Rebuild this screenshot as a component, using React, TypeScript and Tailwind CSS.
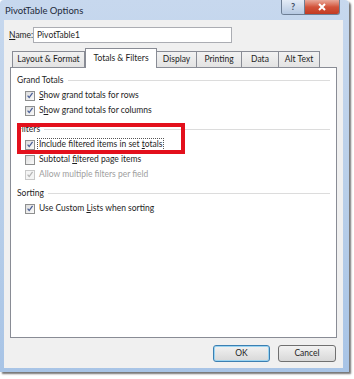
import React from "react";

const font = { fontFamily: 'Lato, "Noto Sans", sans-serif' };

const Check = ({ checked, disabled }: { checked?: boolean; disabled?: boolean }) => (
  <span
    className={`relative flex h-[10px] w-[10px] shrink-0 items-center justify-center border ${
      disabled ? "border-[#c8c8c8] bg-[#f4f4f4]" : "border-[#8e8f8f] bg-gradient-to-br from-[#dcdcdc] to-[#fbfbfb]"
    }`}
  >
    {checked && (
      <svg viewBox="0 0 10 10" className="h-[9px] w-[9px]">
        <path
          d="M2 5.2 L4 7.6 L8.2 1.8"
          fill="none"
          stroke={disabled ? "#b4b4b4" : "#4a5f97"}
          strokeWidth="1.6"
        />
      </svg>
    )}
  </span>
);

const Row = ({
  label,
  checked,
  disabled,
  focused,
}: {
  label: React.ReactNode;
  checked?: boolean;
  disabled?: boolean;
  focused?: boolean;
}) => (
  <div className="flex h-[15px] items-center gap-[2px] pl-[14px]">
    <Check checked={checked} disabled={disabled} />
    <span
      className={`whitespace-nowrap px-[1px] leading-[11px] ${disabled ? "text-[#a0a0a0]" : "text-[#1e1e1e]"} ${
        focused ? "border border-dotted border-[#555]" : "border border-transparent"
      }`}
    >
      {label}
    </span>
  </div>
);

const Group = ({ title }: { title: string }) => (
  <div className="flex h-[16px] items-center gap-[4px] pl-[6px] pr-[6px]">
    <span className="text-[#1e1e1e]">{title}</span>
    <div className="h-px flex-1 bg-[#dcdcdc]" />
  </div>
);

const tabs = ["Layout & Format", "Totals & Filters", "Display", "Printing", "Data", "Alt Text"];
const widths = ["w-[73px]", "w-[72px]", "w-[41px]", "w-[46px]", "w-[38px]", "w-[42px]"];

export default function App() {
  return (
    <div className="h-[379px] w-[354px] overflow-hidden bg-white text-[8.5px]" style={font}>
      <div className="relative h-[372px] w-[349px] rounded-t-[4px] bg-gradient-to-b from-[#c7d8ee] via-[#b9cfe9] to-[#a8c4e6] shadow-[2px_2px_2px_rgba(0,0,0,0.55)]">
        {/* title bar */}
        <div className="flex h-[20px] items-start">
          <span className="pl-[5px] pt-[4px] text-[9.5px] text-[#1e2a3a]">PivotTable Options</span>
          <div className="ml-auto mr-[9px] flex h-[15px] overflow-hidden rounded-b-[3px] border border-t-0 border-[#6d7e94]">
            <div className="flex w-[22px] items-center justify-center bg-gradient-to-b from-[#e4ecf6] to-[#b6c9e2] text-[9px] font-bold text-[#3c4b60]">
              ?
            </div>
            <div className="flex w-[35px] items-center justify-center border-l border-[#6d7e94] bg-gradient-to-b from-[#e8a89a] via-[#d2533a] to-[#c23a22]">
              <svg viewBox="0 0 10 8" className="h-[8px] w-[10px]">
                <path d="M2 1 L8 7 M8 1 L2 7" stroke="white" strokeWidth="2" />
              </svg>
            </div>
          </div>
        </div>

        {/* client area */}
        <div className="ml-[4px] flex h-[348px] w-[339px] flex-col bg-[#f0f0f0]">
          <div className="flex h-[29px] items-center pl-[5px] pt-[1px]">
            <span className="w-[24px] shrink-0 whitespace-nowrap text-[#1e1e1e]">
              <span className="underline">N</span>ame:
            </span>
            <div className="flex h-[16px] w-[199px] items-center border border-[#abadb3] bg-white pl-[3px] text-[#1e1e1e]">
              PivotTable1
            </div>
          </div>

          {/* tabs */}
          <div className="relative z-10 flex h-[18px] items-end pl-[8px]">
            {tabs.map((t, i) =>
              i === 1 ? (
                <div
                  key={t}
                  className={`-mb-px flex h-[20px] ${widths[i]} items-center justify-center whitespace-nowrap border border-b-0 border-[#898c95] bg-white text-[#1e1e1e]`}
                >
                  {t}
                </div>
              ) : (
                <div
                  key={t}
                  className={`flex h-[16px] ${widths[i]} items-center justify-center whitespace-nowrap border border-b-0 border-[#898c95] bg-gradient-to-b from-[#f2f2f2] to-[#e3e3e3] text-[#1e1e1e] ${
                    i > 0 ? "-ml-px" : ""
                  }`}
                >
                  {t}
                </div>
              )
            )}
          </div>

          {/* panel */}
          <div className="relative ml-[6px] flex h-[271px] w-[327px] flex-col border border-[#898c95] bg-white pt-[4px]">
            <Group title="Grand Totals" />
            <Row checked label={<><span className="underline">S</span>how grand totals for rows</>} />
            <Row checked label={<>S<span className="underline">h</span>ow grand totals for columns</>} />
            <div className="h-[3px]" />
            <Group title="Filters" />
            <Row
              checked
              focused
              label={<>Include filtered items in set <span className="underline">t</span>otals</>}
            />
            <Row label={<>Subtotal <span className="underline">f</span>iltered page items</>} />
            <Row checked disabled label="Allow multiple filters per field" />
            <div className="h-[3px]" />
            <Group title="Sorting" />
            <Row checked label={<>Use Custom <span className="underline">L</span>ists when sorting</>} />

            {/* highlight */}
            <div className="absolute left-[6px] top-[55px] h-[31px] w-[168px] border-[4px] border-[#e3101c]" />
          </div>

          {/* buttons */}
          <div className="flex flex-1 items-center justify-end gap-[8px] pr-[7px]">
            <button className="h-[17px] w-[57px] rounded-[3px] border border-[#3c7fb1] bg-gradient-to-b from-[#f2f2f2] to-[#d8d8d8] text-[#1e1e1e] shadow-[inset_0_0_0_1px_#9ad4f2]">
              OK
            </button>
            <button className="h-[17px] w-[58px] rounded-[3px] border border-[#707070] bg-gradient-to-b from-[#f2f2f2] to-[#d8d8d8] text-[#1e1e1e]">
              Cancel
            </button>
          </div>
        </div>
      </div>
    </div>
  );
}
